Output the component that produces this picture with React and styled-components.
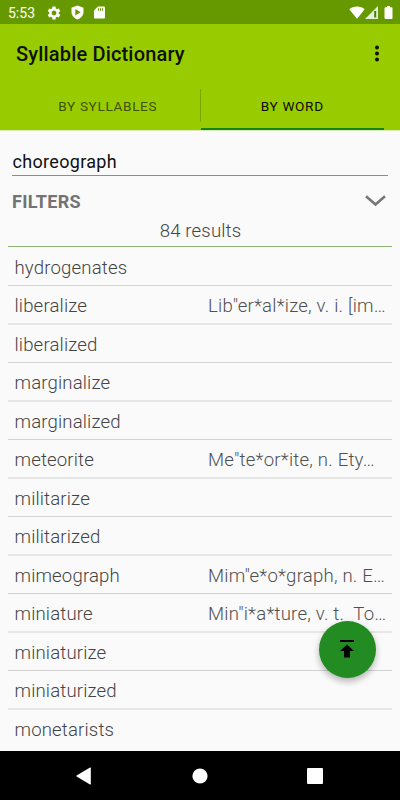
import { useState } from 'react'
import styled, { createGlobalStyle } from 'styled-components'

const GlobalStyle = createGlobalStyle`
   * {
      box-sizing: border-box;
   }

   body {
      margin: 0;
      background: #fafafa;
      font-family: Roboto, 'Liberation Sans', sans-serif;
   }

   button,
   input {
      border: 0;
      padding: 0;
      background: none;
      font-family: inherit;
      outline: none;
   }

   svg {
      display: block;
   }
`

const Screen = styled.div`
   position: relative;
   display: flex;
   flex-direction: column;
   width: 400px;
   height: 800px;
   overflow: hidden;
   background: #fafafa;
`

const StatusBar = styled.div`
   display: flex;
   align-items: center;
   flex: none;
   height: 24px;
   padding: 1px 7px 0 8px;
   background: #669900;
   color: #fff;
`

const Clock = styled.span`
   width: 39px;
   font-size: 14px;
   line-height: 20px;
`

const StatusIcons = styled.div`
   display: flex;
   align-items: center;
   gap: ${({ $gap }) => $gap}px;
   margin-left: ${({ $end }) => ($end ? 'auto' : 0)};
`

const AppBar = styled.header`
   flex: none;
   height: 106px;
   background: #99cc00;
`

const Toolbar = styled.div`
   display: flex;
   align-items: center;
   justify-content: space-between;
   height: 59px;
   padding: 0 20px 0 16px;
`

const Title = styled.h1`
   margin: 0;
   font-size: 20px;
   font-weight: 500;
   letter-spacing: 0.17px;
   line-height: 24px;
   color: #0d1100;
`

const MenuButton = styled.button`
   width: 6px;
   height: 18px;
`

const Tabs = styled.div`
   display: flex;
   height: 47px;
   padding: 0 16px;
`

const Tab = styled.button`
   flex: 1;
   height: 47px;
   padding-top: 1px;
   font-size: 13.6px;
   font-weight: 400;
   letter-spacing: 0.65px;
   color: ${({ $active }) => ($active ? '#0a0d00' : '#3d5200')};
   border-bottom: 2px solid ${({ $active }) => ($active ? '#138613' : 'transparent')};
`

const TabDivider = styled.div`
   width: 1px;
   height: 33px;
   margin-top: 6px;
   background: #7ba500;
`

const Content = styled.main`
   display: flex;
   flex-direction: column;
   flex: 1;
   min-height: 0;
   overflow: hidden;
   padding: 0 8px;
   border-top: 1px solid #dbe8b9;
`

const SearchInput = styled.input`
   flex: none;
   height: 29px;
   margin: 16px 4px 0;
   padding-left: 0.5px;
   border-bottom: 1px solid #8c8c8c;
   font-size: 18px;
   letter-spacing: 0.32px;
   color: #111;
`

const Filters = styled.div`
   display: flex;
   align-items: center;
   justify-content: space-between;
   flex: none;
   height: 41px;
   padding: 9px 6px 0 4px;
`

const FiltersLabel = styled.span`
   font-size: 18px;
   font-weight: 700;
   letter-spacing: 0.3px;
   color: #737373;
`

const Results = styled.div`
   height: 30px;
   flex: none;
   padding: 3px 0 0 1px;
   border-bottom: 1px solid #8db372;
   text-align: center;
   font-size: 18.6px;
   font-weight: 300;
   letter-spacing: 0.15px;
   line-height: 23px;
   color: #444;
`

const WordList = styled.ul`
   margin: 0;
   padding: 0;
   list-style: none;
`

const WordRow = styled.li`
   display: grid;
   grid-template-columns: 193.5px 1fr;
   align-items: center;
   height: 38px;
   padding: 3px 0 0 6.5px;
   border-bottom: 1px solid #d2d2d2;
   white-space: pre;
   line-height: 24px;
   font-size: 18.6px;
   font-weight: 300;
   letter-spacing: 0.15px;

   &:first-child {
      height: 39px;
   }

   &:nth-child(even) {
      height: 39px;
      border-bottom: 2px solid #e6e6e6;
   }

   &:last-child {
      border-bottom-color: transparent;
   }
`

const Word = styled.span`
   color: #444;
`

const Definition = styled.span`
   overflow: hidden;
   letter-spacing: 0.21px;
   color: #505050;
`

const ScrollTop = styled.button`
   position: absolute;
   top: 620.7px;
   left: 318.6px;
   display: flex;
   align-items: center;
   justify-content: center;
   width: 57px;
   height: 57px;
   border-radius: 50%;
   background: #228b22;
   box-shadow: 0 4px 6px rgba(0, 0, 0, 0.22), 0 1px 8px rgba(0, 0, 0, 0.08);
`

const NavBar = styled.nav`
   display: flex;
   align-items: center;
   justify-content: space-between;
   flex: 0 0 49px;
   padding: 0 77px 0 76px;
   background: #000;
`

const words = [
   { word: 'hydrogenates' },
   { word: 'liberalize', definition: 'Lib"er*al*ize, v. i. [im…' },
   { word: 'liberalized' },
   { word: 'marginalize' },
   { word: 'marginalized' },
   { word: 'meteorite', definition: 'Me"te*or*ite, n. Ety…' },
   { word: 'militarize' },
   { word: 'militarized' },
   { word: 'mimeograph', definition: 'Mim"e*o*graph, n. E…' },
   { word: 'miniature', definition: 'Min"i*a*ture, v. t.  To…' },
   { word: 'miniaturize' },
   { word: 'miniaturized' },
   { word: 'monetarists' },
]

const GearIcon = () => (
   <svg width="14" height="14" viewBox="1.5 1.5 21 21" fill="#fff">
      <path d="M19.14 12.94c.04-.3.06-.61.06-.94 0-.32-.02-.64-.07-.94l2.03-1.58a.49.49 0 0 0 .12-.61l-1.92-3.32a.488.488 0 0 0-.59-.22l-2.39.96c-.5-.38-1.03-.7-1.62-.94l-.36-2.54a.484.484 0 0 0-.48-.41h-3.84c-.24 0-.43.17-.47.41l-.36 2.54c-.59.24-1.13.57-1.62.94l-2.39-.96c-.22-.08-.47 0-.59.22L2.74 8.87c-.12.21-.08.47.12.61l2.03 1.58c-.05.3-.09.63-.09.94s.02.64.07.94l-2.03 1.58a.49.49 0 0 0-.12.61l1.92 3.32c.12.22.37.29.59.22l2.39-.96c.5.38 1.03.7 1.62.94l.36 2.54c.05.24.24.41.48.41h3.84c.24 0 .44-.17.47-.41l.36-2.54c.59-.24 1.13-.56 1.62-.94l2.39.96c.22.08.47 0 .59-.22l1.92-3.32c.12-.22.07-.47-.12-.61l-2.01-1.58zM12 15.6A3.61 3.61 0 0 1 8.4 12c0-1.98 1.62-3.6 3.6-3.6s3.6 1.62 3.6 3.6-1.62 3.6-3.6 3.6z" />
   </svg>
)

const ShieldIcon = () => (
   <svg width="13" height="15" viewBox="0 0 13 15">
      <path d="M6.5.5 12.5 2.7v4.4c0 3.5-2.5 6-6 7.5-3.5-1.5-6-4-6-7.5V2.7z" fill="#fff" />
      <path d="M4.3 4v6.6L9.6 7.3z" fill="#669900" />
   </svg>
)

const SdCardIcon = () => (
   <svg width="11" height="13" viewBox="0 0 11 13">
      <path d="M4 .5h6q1 0 1 1v10q0 1-1 1H1q-1 0-1-1v-7z" fill="#fff" />
      <path d="M4 2.3h1.1v2.4H4zM6 2.3h1.1v2.4H6zM8 2.3h1.1v2.4H8z" fill="#669900" />
   </svg>
)

const WifiIcon = () => (
   <svg width="16" height="13" viewBox="0 0 16 13" fill="#fff">
      <path d="M8 12.8.3 3.3C2.5 1.5 5 .6 8 .6s5.5.9 7.7 2.7z" />
   </svg>
)

const SignalIcon = () => (
   <svg width="13" height="13" viewBox="0 0 13 13">
      <path d="M0 13 13 0v13z" fill="#e6f0d4" />
      <path d="M9.2 5h2v6.5h-2z" fill="#38870d" />
   </svg>
)

const BatteryIcon = () => (
   <svg width="15" height="13" viewBox="-6 0 15 13" fill="#fff">
      <path d="M3 0h3v1.3h1.5q1 0 1 1V12q0 1-1 1h-6q-1 0-1-1V2.3q0-1 1-1H3z" />
   </svg>
)

const App = () => {
   const [query, setQuery] = useState('choreograph')
   const [tab, setTab] = useState('word')

   return (
      <Screen>
         <GlobalStyle />
         <StatusBar>
            <Clock>5:53</Clock>
            <StatusIcons $gap={10}>
               <GearIcon />
               <ShieldIcon />
               <SdCardIcon />
            </StatusIcons>
            <StatusIcons $gap={0} $end>
               <WifiIcon />
               <SignalIcon />
               <BatteryIcon />
            </StatusIcons>
         </StatusBar>

         <AppBar>
            <Toolbar>
               <Title>Syllable Dictionary</Title>
               <MenuButton aria-label="More options">
                  <svg width="6" height="18" viewBox="0 0 6 18" fill="#0d1100">
                     <circle cx="3" cy="2.5" r="2" />
                     <circle cx="3" cy="8.5" r="2" />
                     <circle cx="3" cy="14.5" r="2" />
                  </svg>
               </MenuButton>
            </Toolbar>
            <Tabs>
               <Tab $active={tab === 'syllables'} onClick={() => setTab('syllables')}>
                  BY SYLLABLES
               </Tab>
               <TabDivider />
               <Tab $active={tab === 'word'} onClick={() => setTab('word')}>
                  BY WORD
               </Tab>
            </Tabs>
         </AppBar>

         <Content>
            <SearchInput value={query} onChange={(e) => setQuery(e.target.value)} />
            <Filters>
               <FiltersLabel>FILTERS</FiltersLabel>
               <svg width="21" height="12" viewBox="0 0 21 12" fill="none" stroke="#777" strokeWidth="2.6">
                  <path d="M1 1.2 10.5 9.5 20 1.2" />
               </svg>
            </Filters>
            <Results>84 results</Results>
            <WordList>
               {words.map(({ word, definition }) => (
                  <WordRow key={word}>
                     <Word>{word}</Word>
                     {definition && <Definition>{definition}</Definition>}
                  </WordRow>
               ))}
            </WordList>
         </Content>

         <ScrollTop aria-label="Scroll to top">
            <svg width="14" height="18" viewBox="0 0 14 18" fill="#000">
               <path d="M0 0h14v2H0zM7 4.5 14 11h-4v6.500H4V11H0z" />
            </svg>
         </ScrollTop>

         <NavBar>
            <svg width="17" height="18" viewBox="0 0 17 18" fill="#fff">
               <path d="M14 .6q.8-.4.8.5v15.8q0 .9-.8.5L.6 9.5Q0 9 .6 8.5z" />
            </svg>
            <svg width="16" height="16" viewBox="0 0 16 16" fill="#fff">
               <circle cx="8" cy="8" r="7.6" />
            </svg>
            <svg width="16" height="16" viewBox="0 0 16 16" fill="#fff">
               <rect width="16" height="16" rx="1" />
            </svg>
         </NavBar>
      </Screen>
   )
}

export default App
